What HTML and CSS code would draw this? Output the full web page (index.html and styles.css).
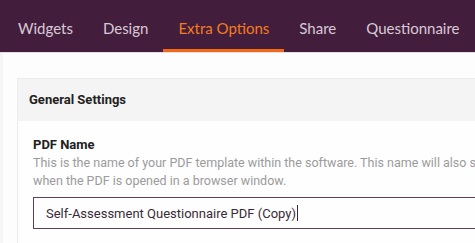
FILE: index.html
```html
<!DOCTYPE html>
<html lang="en">

<head>
    <meta charset="UTF-8">
    <meta name="viewport" content="width=device-width, initial-scale=1.0">
    <title>Extra Options</title>
    <link rel="stylesheet" href="styles.css">
</head>

<body>
    <nav class="tabs">
        <a href="#" class="tab">Widgets</a>
        <a href="#" class="tab">Design</a>
        <a href="#" class="tab active">Extra Options</a>
        <a href="#" class="tab">Share</a>
        <a href="#" class="tab">Questionnaire</a>
    </nav>

    <div class="page">
        <div class="panel">
            <div class="panel-head">General Settings</div>
            <div class="panel-body">
                <label class="field-label" for="pdf-name">PDF Name</label>
                <p class="field-help">This is the name of your PDF template within the software. This name will also show up as the tab title<br>when the PDF is opened in a browser window.</p>
                <div class="field-input">
                    <span id="pdf-name">Self-Assessment Questionnaire PDF (Copy)</span><span class="caret"></span>
                </div>
            </div>
        </div>
    </div>
</body>

</html>
```

FILE: styles.css
```css
html,
body {
    margin: 0;
    overflow: hidden;
}

body {
    width: 760px;
    background: #fdfdfd;
    font-family: Roboto, "Liberation Sans", sans-serif;
}

/* tabs */

.tabs {
    display: flex;
    height: 52px;
    padding-left: 3px;
    background: #421e3c;
    border-bottom: 1px solid #e4dde4;
}

.tab {
    display: flex;
    align-items: center;
    padding: 6px 15px 0;
    font-family: Lato, "Open Sans", sans-serif;
    font-size: 15px;
    color: #d9c9d7;
    text-decoration: none;
    border-bottom: 3px solid transparent;
}

.tab.active {
    color: #f47b20;
    border-bottom-color: #f26a15;
}

/* panel */

.page {
    padding: 25px 0 0 17px;
    background: linear-gradient(to right, #f6f6f6 0, #f6f6f6 3px, #fdfdfd 3px);
    min-height: 200px;
}

.panel {
    border: 1px solid #ececec;
    border-right: none;
    background: #fefefe;
}

.panel-head {
    height: 42px;
    line-height: 42px;
    padding-left: 11px;
    background: #f4f4f4;
    font-size: 13px;
    font-weight: bold;
    color: #222;
}

.panel-body {
    padding: 15px 0 20px 15px;
}

.field-label {
    display: block;
    font-size: 13px;
    font-weight: bold;
    color: #222;
    line-height: 18px;
}

.field-help {
    margin: 0 0 7px;
    font-size: 12.5px;
    line-height: 18px;
    color: #9b9b9b;
    white-space: nowrap;
}

.field-input {
    display: flex;
    align-items: center;
    height: 30px;
    padding-left: 12px;
    border: 1px solid #5f3f58;
    font-size: 13px;
    color: #3a2a36;
}

.caret {
    display: inline-block;
    width: 1px;
    height: 16px;
    margin-left: 1px;
    background: #3a2a36;
}
```
